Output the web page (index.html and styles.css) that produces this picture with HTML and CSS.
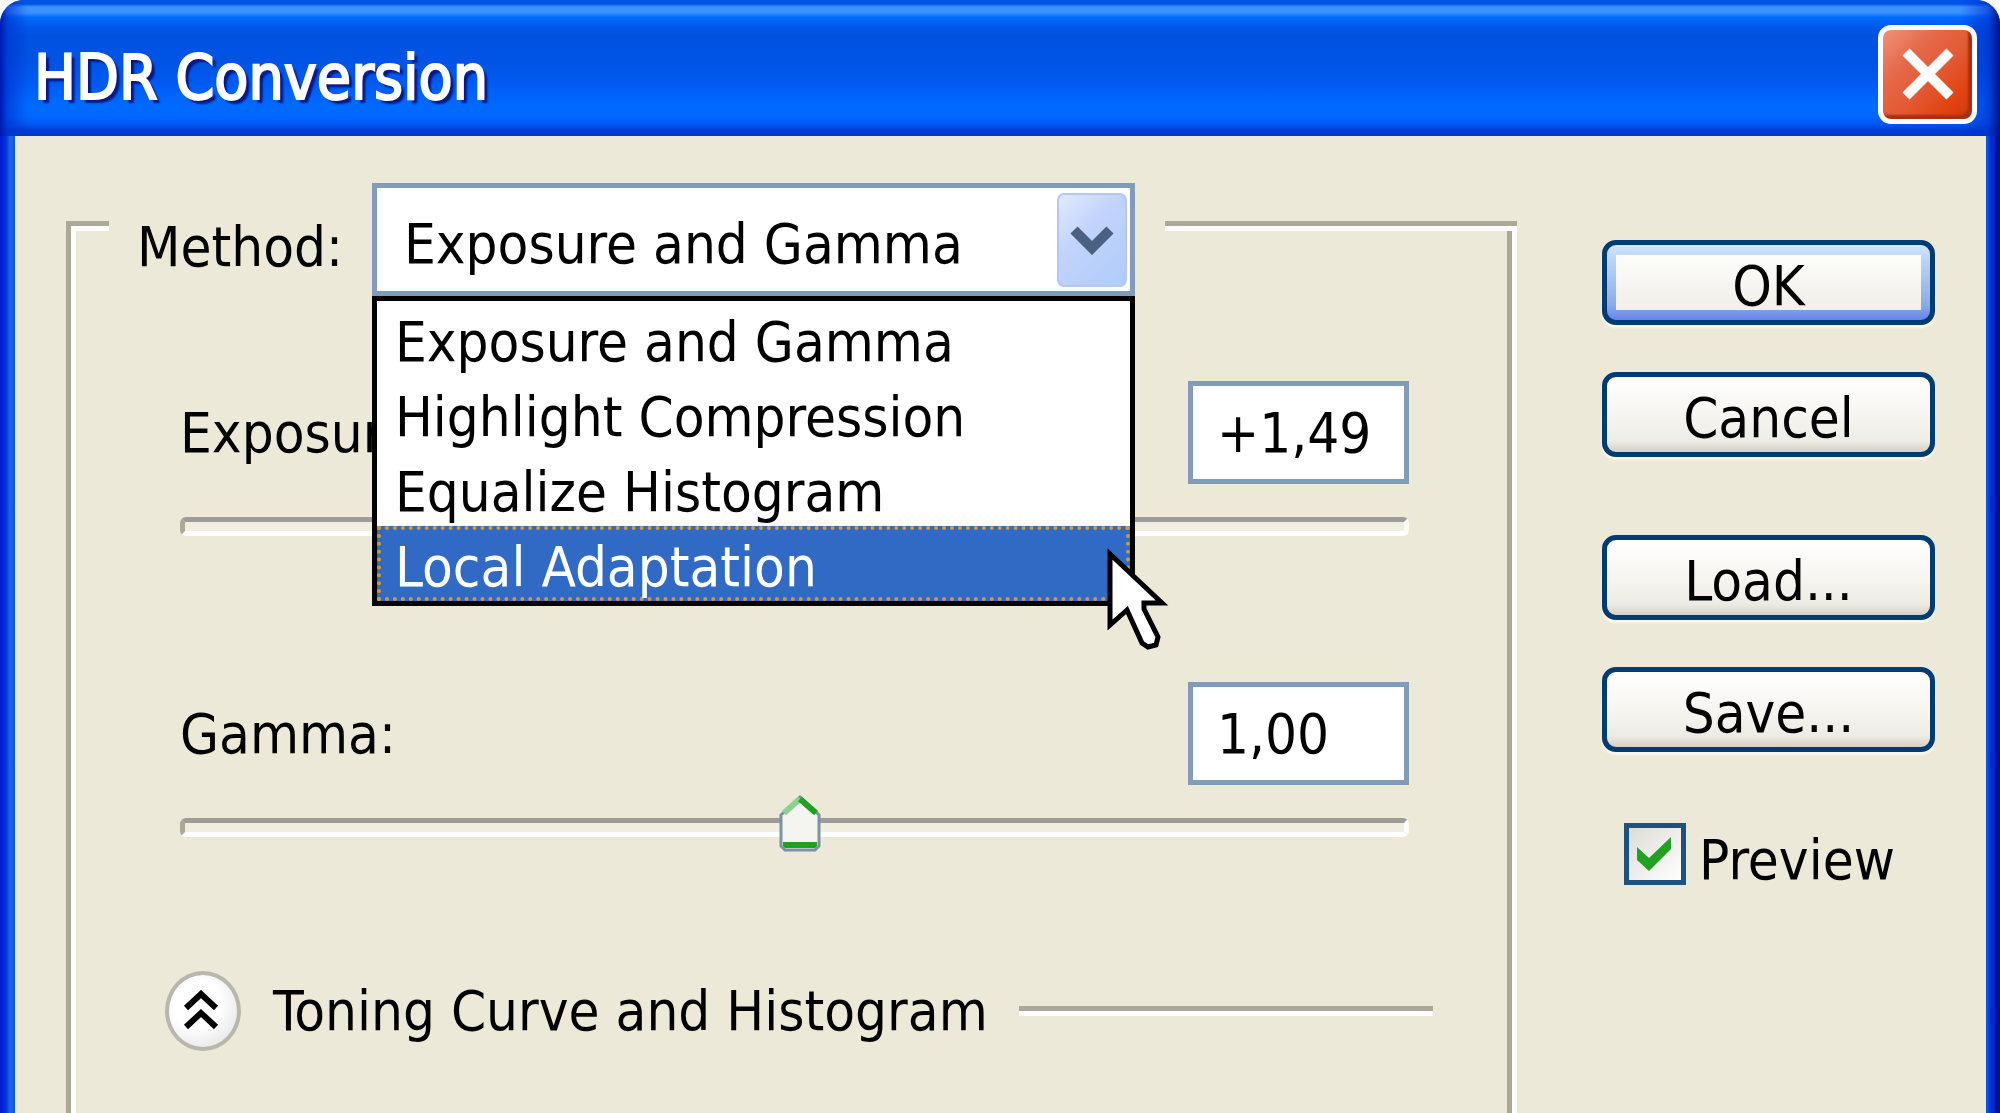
FILE: index.html
```
<!DOCTYPE html>
<html lang="en">
<head>
<meta charset="utf-8">
<meta name="viewport" content="width=device-width, initial-scale=1">
<title>HDR Conversion</title>
<link rel="stylesheet" href="styles.css">
</head>
<body>
<main class="window">
  <header class="titlebar">
    <h1 class="title">HDR Conversion</h1>
    <button class="close" type="button" aria-label="Close">
      <svg class="close-icon" viewBox="0 0 54 54" aria-hidden="true"><path d="M5 5 49 49M49 5 5 49" fill="none" stroke="#fff" stroke-width="10"/></svg>
    </button>
  </header>
  <form class="client">
    <section class="group">
      <div class="group-head">
        <span class="rule rule-stub"></span>
        <label class="method-label" for="method">Method:</label>
        <div class="combo">
          <select class="combo-field" id="method">
            <option selected>Exposure and Gamma</option>
            <option>Highlight Compression</option>
            <option>Equalize Histogram</option>
            <option>Local Adaptation</option>
          </select>
          <span class="combo-arrow">
            <svg class="arrow-icon" viewBox="0 0 44 30" aria-hidden="true"><path d="M4 5 22 23 40 5" fill="none" stroke="#4a6184" stroke-width="10"/></svg>
          </span>
          <ul class="menu" role="listbox" aria-label="Method">
            <li class="menu-item" role="option">Exposure and Gamma</li>
            <li class="menu-item" role="option">Highlight Compression</li>
            <li class="menu-item" role="option">Equalize Histogram</li>
            <li class="menu-item menu-item-active" role="option" aria-selected="true">Local Adaptation
              <svg class="cursor" viewBox="0 0 62 104" aria-hidden="true"><path d="M3 6V77L20 62 35 95 41 99 49 97 51 89 37 61V55H55Z" fill="#fff" stroke="#000" stroke-width="5"/></svg>
            </li>
          </ul>
        </div>
        <span class="rule rule-fill"></span>
      </div>
      <div class="settings">
        <div class="setting">
          <div class="setting-row">
            <label for="exposure">Exposure:</label>
            <input class="value" id="exposure" type="text" value="+1,49">
          </div>
          <input class="slider" type="range" min="0" max="1000" value="537" aria-label="Exposure">
        </div>
        <div class="setting">
          <div class="setting-row">
            <label for="gamma">Gamma:</label>
            <input class="value" id="gamma" type="text" value="1,00">
          </div>
          <input class="slider" type="range" min="0" max="1000" value="505" aria-label="Gamma">
        </div>
      </div>
      <div class="curve">
        <button class="toggle" type="button" aria-label="Collapse">
          <svg class="toggle-icon" viewBox="0 0 36 40" aria-hidden="true"><path d="M3 18 18 4 33 18M3 37 18 23 33 37" fill="none" stroke="#000" stroke-width="6"/></svg>
        </button>
        <span class="curve-title">Toning Curve and Histogram</span>
        <span class="rule curve-rule"></span>
      </div>
    </section>
    <aside class="actions">
      <div class="button-pair">
        <button class="button button-default" type="button">OK</button>
        <button class="button" type="button">Cancel</button>
      </div>
      <div class="button-pair">
        <button class="button" type="button">Load...</button>
        <button class="button" type="button">Save...</button>
      </div>
      <label class="preview"><input class="check" type="checkbox" checked><span class="preview-text">Preview</span></label>
    </aside>
  </form>
</main>
</body>
</html>
```
FILE: styles.css
```
* { box-sizing: border-box; }

body {
  margin: 0;
  background: #fff;
  color: #000;
  font: 56px/64px "DejaVu Sans Condensed", "DejaVu Sans", sans-serif;
}

button, input, select {
  margin: 0;
  font: inherit;
  color: inherit;
}

.window {
  display: flex;
  flex-direction: column;
  min-height: 100vh;
  overflow: hidden;
  border-radius: 24px 24px 0 0;
  background: #0040dc;
}

.titlebar {
  display: flex;
  justify-content: space-between;
  align-items: center;
  height: 136px;
  padding: 12px 23px 0 34px;
  background:
    linear-gradient(90deg, #0019b0 0, #0030d0a0 8px, #0050e000 28px, #0050e000 calc(100% - 40px), #0030d0a0 calc(100% - 12px), #00138c 100%),
    linear-gradient(#0055e8 0, #0055e8 4px, #3f95ff 7px, #3a90ff 13px, #006cff 17px, #0058e8 27px, #0052e0 36px, #0054e6 66px, #005cf4 86px, #006aff 104px, #0068ff 116px, #0058f0 124px, #003cd4 130px, #0038d0 136px);
}

.title {
  margin: 0;
  padding-top: 8px;
  color: #fff;
  font-weight: 400;
  font-size: 62px;
  line-height: 72px;
  -webkit-text-stroke: 2px #fff;
  text-shadow: 4px 4px 2px #0a1883;
}

.close {
  display: grid;
  place-items: center;
  width: 99px;
  height: 99px;
  padding: 0;
  border: 5px solid #fff;
  border-radius: 13px;
  background: linear-gradient(135deg, #f0937c 0, #e5694a 30%, #e35a35 55%, #e2420f 80%, #c93a10 100%);
  box-shadow: inset -4px -4px 2px #a8300e;
}

.close-icon { width: 54px; height: 54px; }

.client {
  display: flex;
  flex: 1;
  gap: 85px;
  margin: 0;
  padding: 0 51px 0 51px;
  border-style: solid;
  border-width: 0 14px 0 15px;
  border-color: transparent;
  background:
    linear-gradient(#ece9d8, #ece9d8) padding-box,
    linear-gradient(90deg, #0019cf 0, #0831d9 6px, #166aee 10px, #0855dd 15px, #0855dd calc(100% - 14px), #0a50e0 calc(100% - 12px), #0026d8 calc(100% - 9px), #0026d8 calc(100% - 6px), #00138c calc(100% - 4px), #00138c 100%) border-box;
}

.group {
  flex: 1;
  min-width: 0;
  margin-top: 85px;
  box-shadow:
    inset 5px 0 #aca899,
    inset -5px 0 #fff,
    inset 10px 0 #fff,
    inset -10px 0 #aca899;
}

.group-head {
  display: flex;
  margin-top: -38px;
}

.rule {
  height: 10px;
  background: linear-gradient(#aca899 50%, #fff 50%);
}

.rule-stub { width: 43px; margin-top: 38px; box-shadow: inset 5px 0 #aca899; }
.rule-fill { flex: 1; margin: 38px 0 0 30px; }

.method-label { margin: 32px 29px 0 28px; }

.combo {
  position: relative;
  flex: 0 1 763px;
  height: 113px;
}

.combo-field {
  appearance: none;
  width: 100%;
  height: 113px;
  padding: 8px 80px 0 27px;
  border: 5px solid #7f9db9;
  border-radius: 0;
  background: #fff;
}

.combo-arrow {
  position: absolute;
  top: 10px;
  right: 8px;
  display: grid;
  place-items: center;
  width: 70px;
  height: 94px;
  border: 2px solid #b4c8f4;
  border-radius: 7px;
  background: linear-gradient(135deg, #e1eafe 0, #c3d3fd 40%, #aecdf9 100%);
  pointer-events: none;
}

.arrow-icon { width: 44px; height: 30px; }

.menu {
  position: absolute;
  top: 100%;
  left: 0;
  z-index: 1;
  width: 100%;
  margin: 0;
  padding: 0;
  border: 5px solid #000;
  background: #fff;
  list-style: none;
}

.menu-item {
  height: 75px;
  padding: 9px 18px 0;
}

.menu-item-active {
  position: relative;
  padding: 5px 14px 0;
  border: 4px dotted #ce9a3c;
  background: #316ac5;
  color: #fff;
}

.cursor {
  position: absolute;
  top: 18px;
  right: -43px;
  width: 62px;
  height: 104px;
}

.settings {
  display: grid;
  gap: 127px;
  padding: 85px 108px 0 114px;
}

.setting-row {
  display: flex;
  justify-content: space-between;
  align-items: center;
}

.value {
  width: 221px;
  height: 103px;
  padding: 0 15px 0 24px;
  border: 5px solid #7f9db9;
  border-radius: 0;
  background: #fff;
}

.slider {
  appearance: none;
  display: block;
  width: 100%;
  height: 57px;
  margin-top: 14px;
  background: none;
}

.slider::-webkit-slider-runnable-track {
  height: 19px;
  border-style: solid;
  border-width: 5px;
  border-color: #9d9c99 #fbfbfa #fff #aca899;
  border-radius: 6px;
  background: #f1eee0;
}

.slider::-webkit-slider-thumb {
  appearance: none;
  width: 42px;
  height: 57px;
  margin-top: -28px;
  background: url("data:image/svg+xml,%3Csvg xmlns='http://www.w3.org/2000/svg' viewBox='0 0 42 57'%3E%3Cpath d='M2 20 21 2 40 20V51L36 55H6L2 51Z' fill='%23f4f4f0' stroke='%237d91a3' stroke-width='3'/%3E%3Cpath d='M5 18 21 4' stroke='%238fd08f' stroke-width='6'/%3E%3Cpath d='M21 4 37 18' stroke='%2321a121' stroke-width='6'/%3E%3Cpath d='M4 47H38V51L36 53H6L4 51Z' fill='%2321a121'/%3E%3C/svg%3E") center / 42px 57px no-repeat;
}

.curve {
  display: flex;
  align-items: center;
  padding: 115px 84px 0 99px;
}

.toggle {
  display: grid;
  place-items: center;
  width: 76px;
  height: 80px;
  padding: 0 4px 3px 0;
  border: 4px solid #b9b7ad;
  border-radius: 50%;
  background: radial-gradient(circle at 40% 40%, #fff 40%, #dcdcdc 100%);
}

.toggle-icon { width: 36px; height: 40px; }
.curve-title { margin: 0 31px 0 32px; white-space: nowrap; }
.curve-rule { flex: 1; }

.actions {
  display: flex;
  flex: 0 0 333px;
  flex-direction: column;
  gap: 78px;
  padding-top: 104px;
}

.button-pair { display: grid; gap: 47px; }

.button {
  height: 85px;
  padding: 6px 0 0;
  border: 5px solid #003c74;
  border-radius: 14px;
  background: linear-gradient(#fff 0, #f6f5f1 50%, #edece4 85%, #d6d0c5 100%);
  box-shadow: 0 3px 2px #faf8ee;
}

.button-default {
  background:
    linear-gradient(#fdfdfb, #f0efe8) 50% 50% / calc(100% - 18px) calc(100% - 20px) no-repeat,
    linear-gradient(#cee7ff 0, #bcd4f6 20%, #89ade4 80%, #6982ee 100%);
}

.preview {
  display: flex;
  align-items: center;
  gap: 13px;
  margin: -14px 0 0 22px;
}

.check {
  appearance: none;
  width: 62px;
  height: 62px;
  border: 5px solid #1c5180;
  background:
    url("data:image/svg+xml,%3Csvg xmlns='http://www.w3.org/2000/svg' viewBox='0 0 34 34'%3E%3Cpath d='M0 10 12 21 34 0V12L12 34 0 23Z' fill='%2321a121'/%3E%3C/svg%3E") 8px 9px / 34px 34px no-repeat,
    linear-gradient(135deg, #dcdcd7, #fff);
}

.preview-text { padding-top: 12px; }
```
